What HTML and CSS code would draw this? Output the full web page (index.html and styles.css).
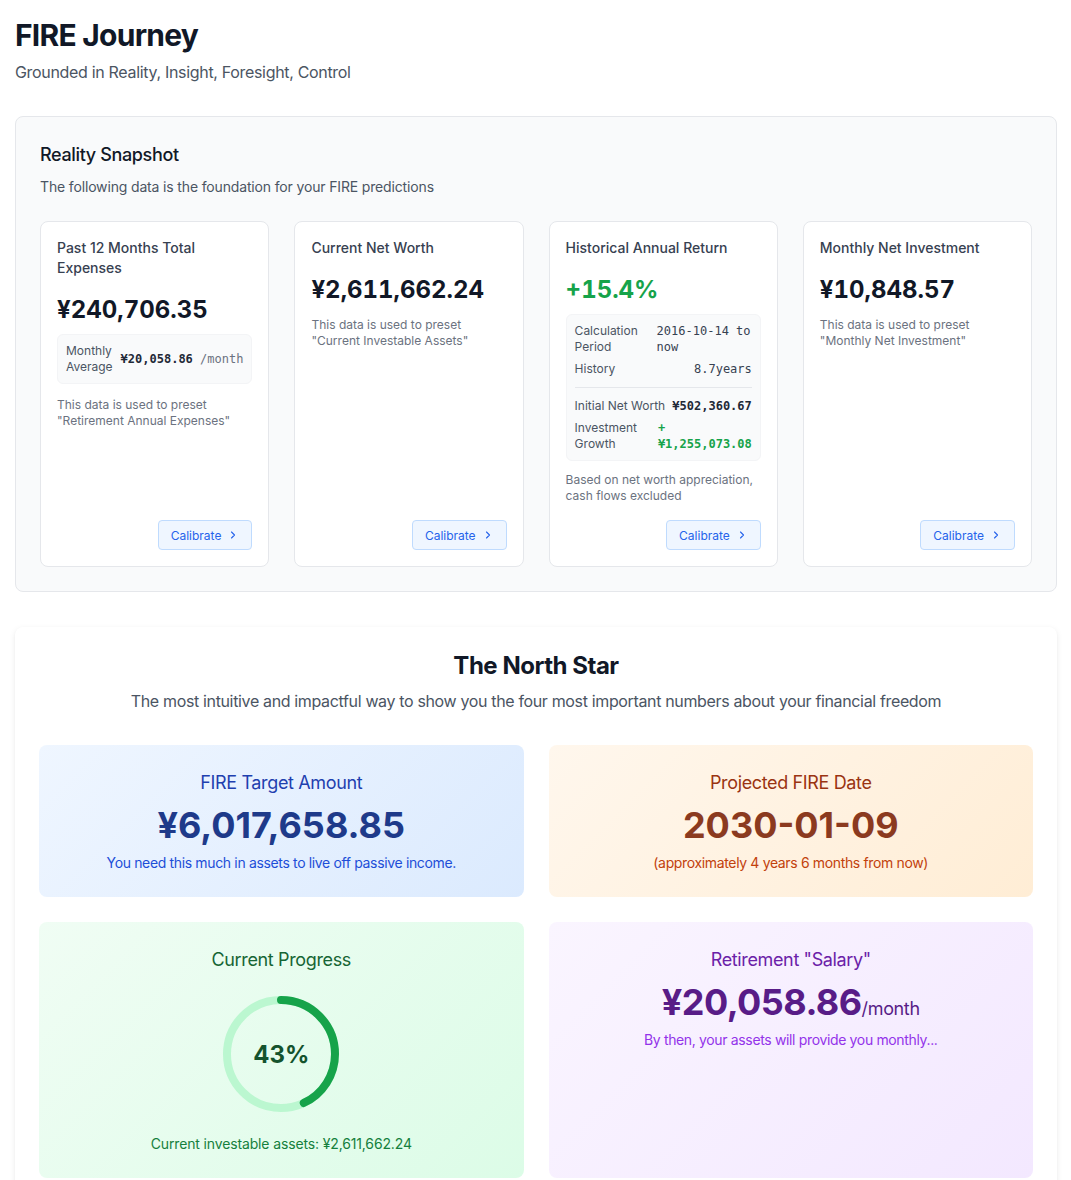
FILE: index.html
```html
<!DOCTYPE html>
<html lang="en">
<head>
<meta charset="utf-8">
<title>FIRE Journey</title>
<link rel="stylesheet" href="styles.css">
</head>
<body>
<div class="page">
  <header class="page-header">
    <h1 class="page-title">FIRE Journey</h1>
    <p class="page-sub">Grounded in Reality, Insight, Foresight, Control</p>
  </header>

  <section class="snapshot">
    <h2 class="snap-title">Reality Snapshot</h2>
    <p class="snap-sub">The following data is the foundation for your FIRE predictions</p>
    <div class="snap-grid">
      <div class="snap-card">
        <div class="sc-body">
          <div class="sc-label">Past 12 Months Total Expenses</div>
          <div class="sc-value">¥240,706.35</div>
          <div class="sc-box avg-box">
            <span class="box-label">Monthly Average</span>
            <span class="mono avg-val"><b class="mono-strong">¥20,058.86</b> <span class="mono-muted">/month</span></span>
          </div>
          <p class="sc-note after-box1">This data is used to preset "Retirement Annual Expenses"</p>
        </div>
        <div class="sc-foot"><button class="cal-btn">Calibrate <svg width="12" height="12" viewBox="0 0 24 24" fill="none" stroke="currentColor" stroke-width="2.2" stroke-linecap="round" stroke-linejoin="round"><path d="M9 6l6 6-6 6"/></svg></button></div>
      </div>

      <div class="snap-card">
        <div class="sc-body">
          <div class="sc-label">Current Net Worth</div>
          <div class="sc-value">¥2,611,662.24</div>
          <p class="sc-note">This data is used to preset "Current Investable Assets"</p>
        </div>
        <div class="sc-foot"><button class="cal-btn">Calibrate <svg width="12" height="12" viewBox="0 0 24 24" fill="none" stroke="currentColor" stroke-width="2.2" stroke-linecap="round" stroke-linejoin="round"><path d="M9 6l6 6-6 6"/></svg></button></div>
      </div>

      <div class="snap-card">
        <div class="sc-body">
          <div class="sc-label">Historical Annual Return</div>
          <div class="sc-value green">+15.4%</div>
          <div class="sc-box ret-box">
            <div class="ret-row period"><span class="box-label">Calculation Period</span><span class="mono ret-val">2016-10-14 to now</span></div>
            <div class="ret-row"><span class="box-label">History</span><span class="mono ret-val">8.7years</span></div>
            <div class="ret-div"></div>
            <div class="ret-row"><span class="box-label">Initial Net Worth</span><b class="mono mono-strong">¥502,360.67</b></div>
            <div class="ret-row growth"><span class="box-label">Investment Growth</span><b class="mono mono-green">+ ¥1,255,073.08</b></div>
          </div>
          <p class="sc-note">Based on net worth appreciation, cash flows excluded</p>
        </div>
        <div class="sc-foot"><button class="cal-btn">Calibrate <svg width="12" height="12" viewBox="0 0 24 24" fill="none" stroke="currentColor" stroke-width="2.2" stroke-linecap="round" stroke-linejoin="round"><path d="M9 6l6 6-6 6"/></svg></button></div>
      </div>

      <div class="snap-card">
        <div class="sc-body">
          <div class="sc-label">Monthly Net Investment</div>
          <div class="sc-value">¥10,848.57</div>
          <p class="sc-note">This data is used to preset "Monthly Net Investment"</p>
        </div>
        <div class="sc-foot"><button class="cal-btn">Calibrate <svg width="12" height="12" viewBox="0 0 24 24" fill="none" stroke="currentColor" stroke-width="2.2" stroke-linecap="round" stroke-linejoin="round"><path d="M9 6l6 6-6 6"/></svg></button></div>
      </div>
    </div>
  </section>

  <section class="north">
    <h2 class="north-title">The North Star</h2>
    <p class="north-sub">The most intuitive and impactful way to show you the four most important numbers about your financial freedom</p>
    <div class="north-grid">
      <div class="ns-card ns-blue">
        <div class="ns-label">FIRE Target Amount</div>
        <div class="ns-value">¥6,017,658.85</div>
        <div class="ns-note">You need this much in assets to live off passive income.</div>
      </div>
      <div class="ns-card ns-orange">
        <div class="ns-label">Projected FIRE Date</div>
        <div class="ns-value">2030-01-09</div>
        <div class="ns-note">(approximately 4 years 6 months from now)</div>
      </div>
      <div class="ns-card ns-green">
        <div class="ns-label">Current Progress</div>
        <div class="ring">
          <svg width="120" height="120" viewBox="0 0 120 120">
            <circle cx="60" cy="60" r="54" fill="none" stroke="#bbf7d0" stroke-width="8"/>
            <circle cx="60" cy="60" r="54" fill="none" stroke="#16a34a" stroke-width="8" stroke-linecap="round" stroke-dasharray="145.9 339.3" transform="rotate(-90 60 60)"/>
          </svg>
          <span class="ring-text">43%</span>
        </div>
        <div class="ns-note">Current investable assets: ¥2,611,662.24</div>
      </div>
      <div class="ns-card ns-purple">
        <div class="ns-label">Retirement "Salary"</div>
        <div class="ns-value">¥20,058.86<span class="ns-unit">/month</span></div>
        <div class="ns-note">By then, your assets will provide you monthly...</div>
      </div>
    </div>
  </section>
</div>
</body>
</html>
```

FILE: styles.css
```css
* { box-sizing: border-box; }
html, body { margin: 0; padding: 0; background: #ffffff; }
body {
  font-family: Inter, "Noto Sans", "Liberation Sans", sans-serif;
  color: #111827;
}
.page { padding: 17px 14px 0 15px; }

.page-header { margin-bottom: 32px; }
.page-title { margin: 0; font-size: 30px; line-height: 36px; font-weight: 700; letter-spacing: -0.025em; color: #111827; }
.page-sub { margin: 7px 0 0 0; font-size: 16px; line-height: 24px; color: #4b5563; letter-spacing: -0.02em; }

.snapshot {
  background: #f9fafb;
  border: 1px solid #e5e7eb;
  border-radius: 8px;
  padding: 24px;
}
.snap-title { margin: 0; font-size: 18px; line-height: 28px; font-weight: 500; color: #111827; letter-spacing: -0.02em; }
.snap-sub { margin: 8px 0 0 0; font-size: 14px; line-height: 20px; color: #4b5563; letter-spacing: -0.011em; }
.snap-grid {
  margin-top: 24px;
  display: grid;
  grid-template-columns: repeat(4, 1fr);
  gap: 25px;
}
.snap-card {
  background: #ffffff;
  border: 1px solid #e5e7eb;
  border-radius: 8px;
  padding: 16px;
  height: 346px;
  display: flex;
  flex-direction: column;
  justify-content: space-between;
}
.sc-label { font-size: 14px; line-height: 20px; font-weight: 500; color: #374151; }
.sc-value {
  margin-top: 16px;
  font-size: 24px;
  line-height: 32px;
  font-weight: 700;
  color: #111827;
  font-variant-numeric: tabular-nums;
}
.sc-value.green { color: #16a34a; }
.sc-box {
  margin-top: 8px;
  background: #f9fafb;
  border: 1px solid #f3f4f6;
  border-radius: 6px;
  padding: 8px;
  font-size: 12px;
  line-height: 16px;
}
.avg-box { display: flex; align-items: center; justify-content: space-between; gap: 8px; }
.avg-val { flex-shrink: 0; white-space: nowrap; }
.box-label { color: #4b5563; }
.mono { font-family: "DejaVu Sans Mono", "Liberation Mono", monospace; font-size: 12px; line-height: 16px; }
.mono-strong { font-weight: 700; color: #1f2937; }
.mono-muted { color: #6b7280; }
.mono-green { color: #16a34a; font-weight: 700; }
.sc-note { margin: 11px 0 0 0; font-size: 12px; line-height: 16px; color: #6b7280; }
.sc-note.after-box1 { margin-top: 13px; }

.ret-row { display: flex; justify-content: space-between; align-items: flex-start; gap: 6px; margin-bottom: 6px; }
.ret-row:last-child { margin-bottom: 0; }
.ret-val { color: #374151; }
.period .box-label { flex: 0 0 76px; }
.period .ret-val { flex: 1; }
.growth .mono { width: min-content; }
.ret-div { height: 1px; background: #e5e7eb; margin: 10px 0 10px 0; }

.sc-foot { display: flex; justify-content: flex-end; }
.cal-btn {
  font-family: inherit;
  display: inline-flex;
  align-items: center;
  gap: 6px;
  height: 30px;
  padding: 0 12px;
  background: #eff6ff;
  border: 1px solid #bfdbfe;
  border-radius: 4px;
  color: #2563eb;
  font-size: 12px;
  font-weight: 400;
}

.north {
  margin-top: 35px;
  background: #ffffff;
  border-radius: 8px;
  box-shadow: 0 2px 6px rgba(0,0,0,0.08), 0 1px 2px rgba(0,0,0,0.04);
  padding: 23px 24px 24px 24px;
  text-align: center;
}
.north-title { margin: 0; font-size: 24px; line-height: 32px; font-weight: 700; color: #111827; letter-spacing: -0.02em; }
.north-sub { margin: 7px 0 0 0; font-size: 16px; line-height: 24px; color: #4b5563; letter-spacing: -0.022em; }
.north-grid {
  margin-top: 32px;
  display: grid;
  grid-template-columns: 1fr 1fr;
  gap: 25px 25px;
}
.ns-card {
  border-radius: 8px;
  padding: 24px;
  display: flex;
  flex-direction: column;
  align-items: center;
}
.ns-label { font-size: 18px; line-height: 28px; font-weight: 400; letter-spacing: -0.02em; }
.ns-value { margin-top: 8px; font-size: 36px; line-height: 40px; font-weight: 700; }
.ns-unit { font-size: 18px; font-weight: 400; line-height: 1; letter-spacing: -0.02em; }
.ns-note { margin-top: 8px; font-size: 14px; line-height: 20px; letter-spacing: -0.025em; }

.ns-blue { background: linear-gradient(135deg, #eff6ff, #dbeafe); }
.ns-blue .ns-label { color: #1e40af; }
.ns-blue .ns-value { color: #1e3a8a; }
.ns-blue .ns-note { color: #1d4ed8; }

.ns-orange { background: linear-gradient(135deg, #fff7ed, #ffedd5); }
.ns-orange .ns-label { color: #9a3412; }
.ns-orange .ns-value { color: #8b3a1f; }
.ns-orange .ns-note { color: #c2410c; }

.ns-green { background: linear-gradient(135deg, #f0fdf4, #dcfce7); }
.ns-green .ns-label { color: #166534; }
.ns-green .ns-note { color: #15803d; margin-top: 20px; letter-spacing: -0.01em; }

.ns-purple { background: linear-gradient(135deg, #faf5ff, #f3e8ff); }
.ns-purple .ns-label { color: #6b21a8; }
.ns-purple .ns-value { color: #581c87; letter-spacing: -0.015em; }
.ns-purple .ns-note { color: #9333ea; }

.ring { position: relative; width: 120px; height: 120px; margin-top: 20px; }
.ring svg { display: block; }
.ring-text {
  position: absolute;
  inset: 0;
  display: flex;
  align-items: center;
  justify-content: center;
  font-size: 24px;
  font-weight: 700;
  color: #14532d;
}
```
